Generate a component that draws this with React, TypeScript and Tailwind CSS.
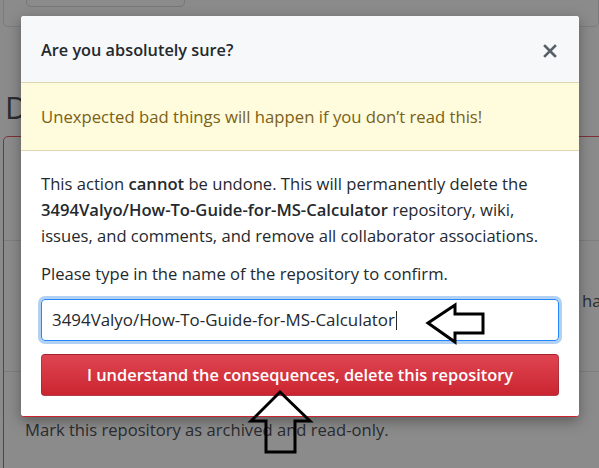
import React from 'react';

const font = { fontFamily: '"Segoe UI", "Open Sans", "Noto Sans", sans-serif' };

const App: React.FC = () => {
  return (
    <div className="relative h-[468px] w-[599px] overflow-hidden bg-[#8b8b8c] text-[#2a2c2f]" style={font}>
      {/* page behind the overlay */}
      <div className="ml-[3px] -mt-[20px] h-[47px] rounded-[5px] border border-[#7b7c7d] pl-[22px]">
        <div className="h-[26px] w-[159px] rounded-[5px] border border-[#76777a]" />
      </div>
      <h2 className="ml-[5px] mt-[60px] text-[31px] leading-[40px] font-normal">Danger Zone</h2>
      <div className="ml-[3px] mt-[9px] w-[640px] rounded-[5px] border border-[#7e3238] pb-[60px]">
        <div className="h-[104px] border-b border-[#7d7e80]" />
        <div className="flex h-[131px] items-center border-b border-[#7d7e80] pl-[578px] pb-[10px]">
          <span className="text-[16.6px] whitespace-nowrap">ha</span>
        </div>
        <div className="pl-[21px] pt-[46px] text-[16.6px] leading-[24px]">
          Mark this repository as archived and read-only.
        </div>
      </div>

      {/* modal */}
      <div className="absolute left-[21px] top-[16px] w-[558px] overflow-hidden rounded-[3px] bg-white shadow-[0_4px_14px_rgba(0,0,0,0.35)] border-b border-[#cb2431]">
        <div className="flex h-[66px] items-center justify-between bg-[#f6f8fa] pl-[20px] pr-[22px] pt-[3px]">
          <h3 className="text-[16.3px] font-semibold text-[#24292e]">Are you absolutely sure?</h3>
          <svg width="14" height="14" viewBox="0 0 14 14" className="text-[#586069]">
            <path d="M2 2 L12 12 M12 2 L2 12" stroke="currentColor" strokeWidth="2.6" strokeLinecap="square" />
          </svg>
        </div>
        <div className="flex h-[69px] items-center border-y border-[#ddd6ae] bg-[#fffbdd] px-[20px] pt-[1px] text-[16.7px] text-[#7a6115]">
          Unexpected bad things will happen if you don’t read this!
        </div>
        <div className="px-[20px] pt-[20px] pb-[20px] text-[16.6px] leading-[26px] text-[#24292e]">
          <p>
            This action <strong className="font-semibold">cannot</strong> be undone. This will permanently delete the{' '}
            <strong className="font-semibold">3494Valyo/How-To-Guide-for-MS-Calculator</strong> repository, wiki,
            issues, and comments, and remove all collaborator associations.
          </p>
          <p className="mt-[12px]">Please type in the name of the repository to confirm.</p>
          <div className="mt-[12px] flex h-[42px] items-center rounded-[4px] border border-[#2188ff] pl-[10px] text-[16.9px] shadow-[0_0_0_3px_rgba(3,102,214,0.3)]">
            <span>3494Valyo/How-To-Guide-for-MS-Calculator</span>
            <span className="ml-[1px] h-[19px] w-[1px] bg-[#24292e]" />
          </div>
          <button className="mt-[13px] flex h-[42px] w-full items-center justify-center rounded-[4px] border border-[rgba(27,31,35,0.2)] bg-gradient-to-b from-[#de4450] to-[#cb2431] text-[16.4px] font-semibold text-white">
            I understand the consequences, delete this repository
          </button>
        </div>
      </div>

      {/* annotation arrows */}
      <svg className="absolute left-0 top-0" width="599" height="468" viewBox="0 0 599 468" fill="none">
        <polygon
          points="428,323 455,305 455,314 483,314 483,333 455,333 455,342"
          stroke="#000"
          strokeWidth="3"
          strokeLinejoin="miter"
        />
        <polygon
          points="280,392 310,421 295,421 295,452 266,452 266,421 251,421"
          stroke="#000"
          strokeWidth="3"
          strokeLinejoin="miter"
        />
      </svg>
    </div>
  );
};

export default App;
